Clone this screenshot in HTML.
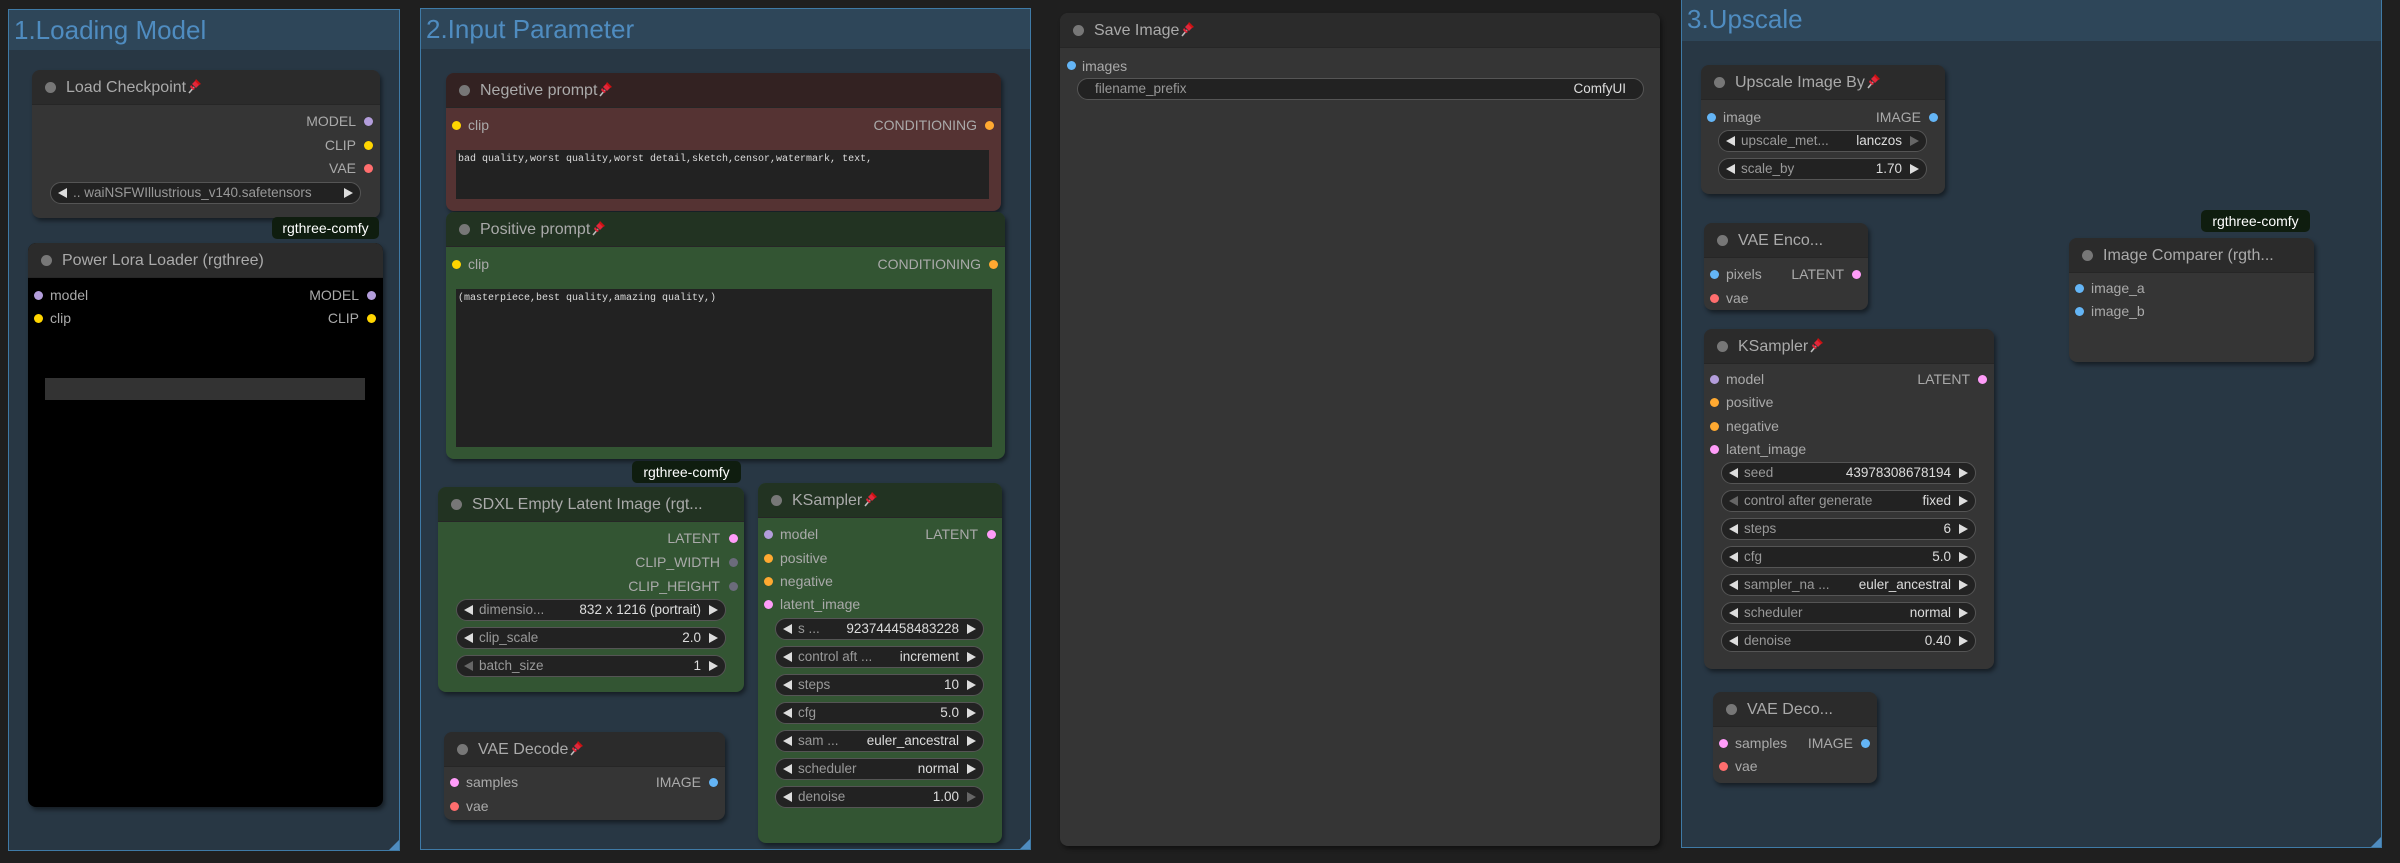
<!DOCTYPE html>
<html><head><meta charset="utf-8"><style>
*{box-sizing:border-box;margin:0;padding:0}
body{width:2400px;height:863px;background:#1f1f1f;position:relative;overflow:hidden;font-family:"Liberation Sans",Arial,sans-serif}
.g{position:absolute;background:#283744;border:1px solid #3f7aa6}
.g .gt{position:absolute;left:0;top:0;right:0;height:40px;background:#2e4659;color:#4f8cc0;font-size:26px;line-height:40px;padding-left:5px}
.g .rh{position:absolute;right:0;bottom:0;width:0;height:0;border-left:10px solid transparent;border-bottom:10px solid #4f8cc0}
.n{position:absolute;background:#353535;border-radius:8px;box-shadow:2px 3px 4px rgba(0,0,0,.45);overflow:hidden}
.n .tb{position:absolute;left:0;top:0;right:0;height:35px;background:#2b2b2b;border-bottom:1px solid #262626;color:#aaa;font-size:16px;line-height:35px;padding-left:34px;white-space:nowrap}
.n .tb:before{content:"";position:absolute;left:13px;top:12px;width:11px;height:11px;border-radius:50%;background:#777}
.s{position:absolute;font-size:14px;color:#aaa;line-height:16px;white-space:nowrap}
.d{position:absolute;width:9px;height:9px;border-radius:50%}
.w{position:absolute;height:22px;background:#222;border:1px solid #555;border-radius:11px;font-size:13.5px;line-height:20px;color:#999;white-space:nowrap}
.w .l{position:absolute;left:22px}
.w .v{position:absolute;right:24px;color:#ddd}
.w:before{content:"";position:absolute;left:7px;top:5px;border-right:9px solid #ddd;border-top:5px solid transparent;border-bottom:5px solid transparent}
.w:after{content:"";position:absolute;right:7px;top:5px;border-left:9px solid #ddd;border-top:5px solid transparent;border-bottom:5px solid transparent}
.w.dl:before{border-right-color:#666}.w.dr:after{border-left-color:#666}
.w.nb:before,.w.nb:after{display:none}
.b{position:absolute;height:22px;background:#0f1d0f;border-radius:5px;color:#fff;font-size:14px;line-height:22px;text-align:center}
.ta{position:absolute;background:#222;font-family:"Liberation Mono",monospace;font-size:10px;color:#ddd;padding:4px 2px}
.pin{display:inline-block;width:14px;height:16px;vertical-align:-2px;margin-left:1px}
.MO{background:#b39ddb}.CL{background:#ffd500}.VA{background:#ff6e6e}.CO{background:#ffa931}.LA{background:#ff9cf9}.IM{background:#64b5f6}.IN{background:#6b6b7b}
</style></head><body>
<svg width="0" height="0" style="position:absolute"><defs><symbol id="p" viewBox="0 0 14 16"><path d="M2 15 L7 9" stroke="#bbb" stroke-width="1.6"/><path d="M5 6 L9 2 L13 6 L9 10 Z" fill="#e2263a"/><path d="M4 7 L8 11 L6 12 L3 9 Z" fill="#e2263a"/><path d="M9 1 L14 6 L12 7 L8 3Z" fill="#c11"/></symbol></defs></svg>

<!-- Group 1 -->
<div class="g" style="left:8px;top:9px;width:392px;height:842px"><div class="gt">1.Loading Model</div><div class="rh"></div></div>
<div class="n" style="left:32px;top:70px;width:348px;height:148px"><div class="tb">Load Checkpoint<svg class="pin"><use href="#p"/></svg></div>
<div class="s" style="right:24px;top:43px">MODEL</div><div class="d MO" style="right:7px;top:47px"></div>
<div class="s" style="right:24px;top:67px">CLIP</div><div class="d CL" style="right:7px;top:71px"></div>
<div class="s" style="right:24px;top:90px">VAE</div><div class="d VA" style="right:7px;top:94px"></div>
</div>
<div class="w" style="left:50px;top:182px;width:311px"><span class="l">.. waiNSFWIllustrious_v140.safetensors</span></div>
<div class="b" style="left:272px;top:217px;width:107px">rgthree-comfy</div>
<div class="n" style="left:28px;top:243px;width:355px;height:564px;background:#000"><div class="tb">Power Lora Loader (rgthree)</div>
<div class="d MO" style="left:6px;top:48px"></div><div class="s" style="left:22px;top:44px">model</div>
<div class="s" style="right:24px;top:44px">MODEL</div><div class="d MO" style="right:7px;top:48px"></div>
<div class="d CL" style="left:6px;top:71px"></div><div class="s" style="left:22px;top:67px">clip</div>
<div class="s" style="right:24px;top:67px">CLIP</div><div class="d CL" style="right:7px;top:71px"></div>
<div style="position:absolute;left:17px;top:135px;width:320px;height:22px;background:#333"></div>
</div>

<!-- Group 2 -->
<div class="g" style="left:420px;top:8px;width:611px;height:842px"><div class="gt">2.Input Parameter</div><div class="rh"></div></div>
<div class="n" style="left:446px;top:73px;width:555px;height:138px;background:#553333"><div class="tb" style="background:#332222">Negetive prompt<svg class="pin"><use href="#p"/></svg></div>
<div class="d CL" style="left:6px;top:48px"></div><div class="s" style="left:22px;top:44px">clip</div>
<div class="s" style="right:24px;top:44px">CONDITIONING</div><div class="d CO" style="right:7px;top:48px"></div>
<div class="ta" style="left:10px;top:77px;width:533px;height:49px">bad quality,worst quality,worst detail,sketch,censor,watermark, text,</div>
</div>
<div class="n" style="left:446px;top:212px;width:559px;height:247px;background:#335533"><div class="tb" style="background:#223322">Positive prompt<svg class="pin"><use href="#p"/></svg></div>
<div class="d CL" style="left:6px;top:48px"></div><div class="s" style="left:22px;top:44px">clip</div>
<div class="s" style="right:24px;top:44px">CONDITIONING</div><div class="d CO" style="right:7px;top:48px"></div>
<div class="ta" style="left:10px;top:77px;width:536px;height:158px">(masterpiece,best quality,amazing quality,)</div>
</div>
<div class="b" style="left:632px;top:461px;width:109px">rgthree-comfy</div>

<div class="n" style="left:438px;top:487px;width:306px;height:205px;background:#335533"><div class="tb" style="background:#223322">SDXL Empty Latent Image (rgt...</div>
<div class="s" style="right:24px;top:43px">LATENT</div><div class="d LA" style="right:6px;top:47px"></div>
<div class="s" style="right:24px;top:67px">CLIP_WIDTH</div><div class="d IN" style="right:6px;top:71px"></div>
<div class="s" style="right:24px;top:91px">CLIP_HEIGHT</div><div class="d IN" style="right:6px;top:95px"></div>
</div>
<div class="w" style="left:456px;top:599px;width:270px"><span class="l">dimensio...</span><span class="v">832 x 1216  (portrait)</span></div>
<div class="w" style="left:456px;top:627px;width:270px"><span class="l">clip_scale</span><span class="v">2.0</span></div>
<div class="w dl" style="left:456px;top:655px;width:270px"><span class="l">batch_size</span><span class="v">1</span></div>

<div class="n" style="left:758px;top:483px;width:244px;height:360px;background:#335533"><div class="tb" style="background:#223322">KSampler<svg class="pin"><use href="#p"/></svg></div>
<div class="d MO" style="left:6px;top:47px"></div><div class="s" style="left:22px;top:43px">model</div>
<div class="s" style="right:24px;top:43px">LATENT</div><div class="d LA" style="right:6px;top:47px"></div>
<div class="d CO" style="left:6px;top:71px"></div><div class="s" style="left:22px;top:67px">positive</div>
<div class="d CO" style="left:6px;top:94px"></div><div class="s" style="left:22px;top:90px">negative</div>
<div class="d LA" style="left:6px;top:117px"></div><div class="s" style="left:22px;top:113px">latent_image</div>
</div>
<div class="w" style="left:775px;top:618px;width:209px"><span class="l">s ...</span><span class="v">923744458483228</span></div>
<div class="w" style="left:775px;top:646px;width:209px"><span class="l">control aft ...</span><span class="v">increment</span></div>
<div class="w" style="left:775px;top:674px;width:209px"><span class="l">steps</span><span class="v">10</span></div>
<div class="w" style="left:775px;top:702px;width:209px"><span class="l">cfg</span><span class="v">5.0</span></div>
<div class="w" style="left:775px;top:730px;width:209px"><span class="l">sam ...</span><span class="v">euler_ancestral</span></div>
<div class="w" style="left:775px;top:758px;width:209px"><span class="l">scheduler</span><span class="v">normal</span></div>
<div class="w dr" style="left:775px;top:786px;width:209px"><span class="l">denoise</span><span class="v">1.00</span></div>

<div class="n" style="left:444px;top:732px;width:281px;height:88px"><div class="tb">VAE Decode<svg class="pin"><use href="#p"/></svg></div>
<div class="d LA" style="left:6px;top:46px"></div><div class="s" style="left:22px;top:42px">samples</div>
<div class="s" style="right:24px;top:42px">IMAGE</div><div class="d IM" style="right:7px;top:46px"></div>
<div class="d VA" style="left:6px;top:70px"></div><div class="s" style="left:22px;top:66px">vae</div>
</div>

<!-- Save Image -->
<div class="n" style="left:1060px;top:13px;width:600px;height:833px"><div class="tb">Save Image<svg class="pin"><use href="#p"/></svg></div>
<div class="d IM" style="left:7px;top:48px"></div><div class="s" style="left:22px;top:45px">images</div>
</div>
<div class="w nb" style="left:1077px;top:78px;width:567px"><span class="l" style="left:17px">filename_prefix</span><span class="v" style="right:17px">ComfyUI</span></div>

<!-- Group 3 -->
<div class="g" style="left:1681px;top:-2px;width:701px;height:850px"><div class="gt" style="height:42px;line-height:40px">3.Upscale</div><div class="rh"></div></div>
<div class="n" style="left:1701px;top:65px;width:244px;height:129px"><div class="tb">Upscale Image By<svg class="pin"><use href="#p"/></svg></div>
<div class="d IM" style="left:6px;top:48px"></div><div class="s" style="left:22px;top:44px">image</div>
<div class="s" style="right:24px;top:44px">IMAGE</div><div class="d IM" style="right:7px;top:48px"></div>
</div>
<div class="w dr" style="left:1718px;top:130px;width:209px"><span class="l">upscale_met...</span><span class="v">lanczos</span></div>
<div class="w" style="left:1718px;top:158px;width:209px"><span class="l">scale_by</span><span class="v">1.70</span></div>

<div class="n" style="left:1704px;top:223px;width:164px;height:87px"><div class="tb">VAE Enco...</div>
<div class="d IM" style="left:6px;top:47px"></div><div class="s" style="left:22px;top:43px">pixels</div>
<div class="s" style="right:24px;top:43px">LATENT</div><div class="d LA" style="right:7px;top:47px"></div>
<div class="d VA" style="left:6px;top:71px"></div><div class="s" style="left:22px;top:67px">vae</div>
</div>

<div class="n" style="left:1704px;top:329px;width:290px;height:340px"><div class="tb">KSampler<svg class="pin"><use href="#p"/></svg></div>
<div class="d MO" style="left:6px;top:46px"></div><div class="s" style="left:22px;top:42px">model</div>
<div class="s" style="right:24px;top:42px">LATENT</div><div class="d LA" style="right:7px;top:46px"></div>
<div class="d CO" style="left:6px;top:69px"></div><div class="s" style="left:22px;top:65px">positive</div>
<div class="d CO" style="left:6px;top:93px"></div><div class="s" style="left:22px;top:89px">negative</div>
<div class="d LA" style="left:6px;top:116px"></div><div class="s" style="left:22px;top:112px">latent_image</div>
</div>
<div class="w" style="left:1721px;top:462px;width:255px"><span class="l">seed</span><span class="v">43978308678194</span></div>
<div class="w dl" style="left:1721px;top:490px;width:255px"><span class="l">control after generate</span><span class="v">fixed</span></div>
<div class="w" style="left:1721px;top:518px;width:255px"><span class="l">steps</span><span class="v">6</span></div>
<div class="w" style="left:1721px;top:546px;width:255px"><span class="l">cfg</span><span class="v">5.0</span></div>
<div class="w" style="left:1721px;top:574px;width:255px"><span class="l">sampler_na ...</span><span class="v">euler_ancestral</span></div>
<div class="w" style="left:1721px;top:602px;width:255px"><span class="l">scheduler</span><span class="v">normal</span></div>
<div class="w" style="left:1721px;top:630px;width:255px"><span class="l">denoise</span><span class="v">0.40</span></div>

<div class="n" style="left:1713px;top:692px;width:164px;height:91px"><div class="tb">VAE Deco...</div>
<div class="d LA" style="left:6px;top:47px"></div><div class="s" style="left:22px;top:43px">samples</div>
<div class="s" style="right:24px;top:43px">IMAGE</div><div class="d IM" style="right:7px;top:47px"></div>
<div class="d VA" style="left:6px;top:70px"></div><div class="s" style="left:22px;top:66px">vae</div>
</div>

<div class="b" style="left:2201px;top:210px;width:109px">rgthree-comfy</div>
<div class="n" style="left:2069px;top:238px;width:245px;height:124px"><div class="tb">Image Comparer (rgth...</div>
<div class="d IM" style="left:6px;top:46px"></div><div class="s" style="left:22px;top:42px">image_a</div>
<div class="d IM" style="left:6px;top:69px"></div><div class="s" style="left:22px;top:65px">image_b</div>
</div>
</body></html>
